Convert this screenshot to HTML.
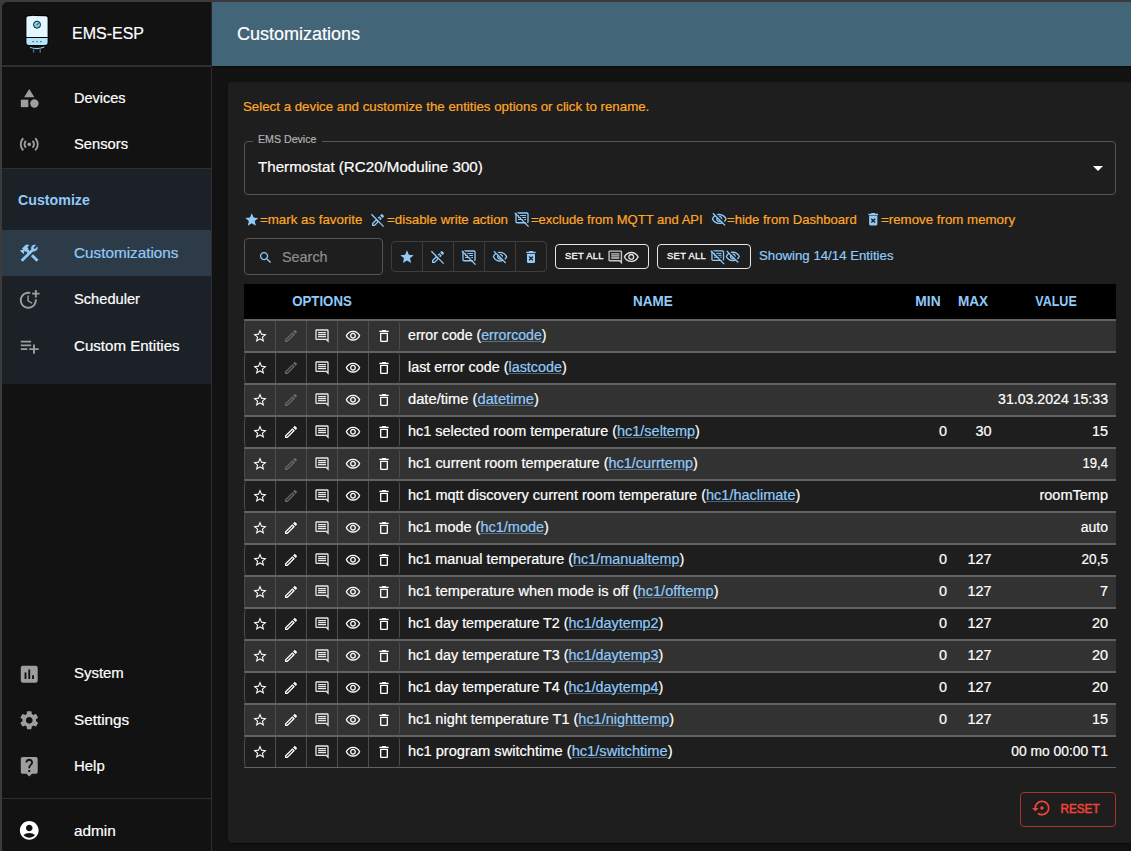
<!DOCTYPE html>
<html><head><meta charset="utf-8">
<style>
*{box-sizing:border-box;margin:0;padding:0}
html,body{width:1131px;height:851px;overflow:hidden;background:#3b3b3b;font-family:"Liberation Sans",sans-serif;color:#fff;position:relative}
.abs{position:absolute}
.ic{position:absolute;display:block}
.txt{position:absolute;white-space:nowrap;line-height:1;-webkit-text-stroke:0.2px currentColor}
.b{-webkit-text-stroke:0}
.lk{color:#90caf9;text-decoration:underline;text-decoration-color:rgba(144,202,249,.4);text-underline-offset:1px}
</style></head><body>
<div class="abs" style="left:2px;top:2px;width:1129px;height:849px;background:#121212;border-top-left-radius:6px"></div>
<div class="abs" style="left:2px;top:2px;width:210px;height:849px;background:#121212;border-right:1px solid #2e2e2e;border-top-left-radius:6px"></div>
<svg class="ic" style="left:22px;top:12px;width:30px;height:44px" viewBox="0 0 30 44">
<path d="M7.3 34.2 Q15 37.2 22.9 33.7 L22.7 35.8 Q15 39.6 7.5 36 Z" fill="#81d4fa" stroke="#000" stroke-width="0.8"/>
<rect x="10.3" y="36.8" width="2.6" height="4.4" rx="0.6" fill="#000"/>
<rect x="10.8" y="37.3" width="1.6" height="3.4" fill="#6a6a6a"/>
<rect x="16.9" y="36.8" width="2.6" height="4.4" rx="0.6" fill="#000"/>
<rect x="17.4" y="37.3" width="1.6" height="3.4" fill="#6a6a6a"/>
<rect x="3.5" y="3" width="23" height="31" rx="3" fill="#000"/>
<path d="M4.4 6 Q4.4 4.4 6.4 4.3 L10 3.9 Q11 3.5 12 3.9 L23.6 4.3 Q25.6 4.4 25.6 6 L25.6 25 L4.4 25 Z" fill="#e3f7fe"/>
<path d="M4.4 25.9 L25.6 25.9 L25.6 30.5 Q25.6 33 23 33 L7 33 Q4.4 33 4.4 30.5 Z" fill="#b3e5fc"/>
<rect x="10.4" y="29.1" width="1.5" height="1.1" fill="#555"/>
<rect x="14.3" y="29.1" width="1.5" height="1.1" fill="#555"/>
<rect x="18.1" y="29.1" width="1.5" height="1.1" fill="#555"/>
<circle cx="15" cy="12.7" r="3.5" fill="#7fcff5" stroke="#000" stroke-width="0.9"/>
<path d="M14.6 13.2 L16.6 11.1" stroke="#000" stroke-width="0.8"/>
</svg>
<div class="txt" style="left:72.3px;top:26.38px;font-size:16.8px;color:#fff;font-weight:normal;transform:scaleX(0.9526);transform-origin:0 50%;">EMS-ESP</div>
<div class="abs" style="left:2px;top:65px;width:209px;height:2px;background:#2f2f2f"></div>
<svg class="ic" style="left:18.05px;top:86.75px;width:22.5px;height:22.5px;fill:#9e9e9e;" viewBox="0 0 24 24"><path d="m12 2-5.5 9h11z"/><circle cx="17.5" cy="17.5" r="4.5"/><path d="M3 13.5h8v8H3z"/></svg>
<div class="txt" style="left:74.2px;top:90.20px;font-size:15px;color:#fff;font-weight:normal;transform:scaleX(0.9672);transform-origin:0 50%;">Devices</div>
<svg class="ic" style="left:18.05px;top:132.75px;width:22.5px;height:22.5px;fill:#9e9e9e;" viewBox="0 0 24 24"><path d="M7.76 16.24C6.67 15.16 6 13.66 6 12s.67-3.16 1.76-4.24l1.42 1.42C8.45 9.9 8 10.9 8 12c0 1.1.45 2.1 1.17 2.83l-1.41 1.41zm8.48 0C17.33 15.16 18 13.66 18 12s-.67-3.16-1.76-4.24l-1.42 1.42C15.55 9.9 16 10.9 16 12c0 1.1-.45 2.1-1.17 2.83l1.41 1.41zM12 10c-1.1 0-2 .9-2 2s.9 2 2 2 2-.9 2-2-.9-2-2-2zm8 2c0 2.21-.9 4.21-2.35 5.65l1.42 1.42C20.88 17.26 22 14.76 22 12s-1.12-5.26-2.93-7.07l-1.42 1.42C19.1 7.79 20 9.79 20 12zM6.35 6.35 4.93 4.93C3.12 6.74 2 9.24 2 12s1.12 5.26 2.93 7.07l1.42-1.42C4.9 16.21 4 14.21 4 12s.9-4.21 2.35-5.65z"/></svg>
<div class="txt" style="left:74.2px;top:136.20px;font-size:15px;color:#fff;font-weight:normal;transform:scaleX(0.9817);transform-origin:0 50%;">Sensors</div>
<div class="abs" style="left:2px;top:168px;width:209px;height:216px;background:#1c2128;border-top:1px solid #2c2e31"></div>
<div class="txt b" style="left:17.8px;top:192.10px;font-size:15px;color:#90caf9;font-weight:bold;transform:scaleX(0.9478);transform-origin:0 50%;">Customize</div>
<div class="abs" style="left:2px;top:230px;width:209px;height:46px;background:#2d3b48"></div>
<svg class="ic" style="left:18.05px;top:241.75px;width:22.5px;height:22.5px;fill:#90caf9;" viewBox="0 0 24 24"><path d="m13.7826 15.1719 2.1213-2.1213 5.9963 5.9962-2.1213 2.1213zM17.5 10c1.93 0 3.5-1.57 3.5-3.5 0-.58-.16-1.12-.41-1.6l-2.7 2.7-1.49-1.49 2.7-2.7c-.48-.25-1.02-.41-1.6-.41C15.57 3 14 4.57 14 6.5c0 .41.08.8.21 1.16l-1.85 1.85-1.78-1.78.71-.71-1.41-1.41L12 3.49c-1.17-1.17-3.07-1.17-4.24 0L4.22 7.03l1.41 1.41H2.81l-.71.71 3.54 3.54.71-.71V9.15l1.41 1.41.71-.71 1.78 1.78-7.41 7.41 2.12 2.12L16.34 9.79c.36.13.75.21 1.16.21z"/></svg>
<div class="txt" style="left:74.2px;top:245.20px;font-size:15px;color:#90caf9;font-weight:normal;transform:scaleX(1.0187);transform-origin:0 50%;">Customizations</div>
<svg class="ic" style="left:18.05px;top:287.75px;width:22.5px;height:22.5px;fill:#9e9e9e;" viewBox="0 0 24 24"><path d="M10 8v6l4.7 2.9.8-1.2-4-2.4V8z"/><path d="M17.92 12c.05.33.08.66.08 1 0 3.9-3.1 7-7 7s-7-3.1-7-7 3.1-7 7-7c.7 0 1.37.1 2 .29V4.23c-.64-.15-1.31-.23-2-.23-5 0-9 4-9 9s4 9 9 9 9-4 9-9c0-.34-.02-.67-.06-1h-2.02z"/><path d="M20 5V2h-2v3h-3v2h3v3h2V7h3V5z"/></svg>
<div class="txt" style="left:74.2px;top:291.20px;font-size:15px;color:#fff;font-weight:normal;transform:scaleX(0.9766);transform-origin:0 50%;">Scheduler</div>
<svg class="ic" style="left:18.05px;top:334.75px;width:22.5px;height:22.5px;fill:#9e9e9e;" viewBox="0 0 24 24"><path d="M14 10H3v2h11v-2zm0-4H3v2h11V6zm4 8v-4h-2v4h-4v2h4v4h2v-4h4v-2h-4zM3 16h7v-2H3v2z"/></svg>
<div class="txt" style="left:74.2px;top:338.20px;font-size:15px;color:#fff;font-weight:normal;transform:scaleX(1.0053);transform-origin:0 50%;">Custom Entities</div>
<svg class="ic" style="left:18.05px;top:662.75px;width:22.5px;height:22.5px;fill:#9e9e9e;" viewBox="0 0 24 24"><path d="M19 3H5c-1.1 0-2 .9-2 2v14c0 1.1.9 2 2 2h14c1.1 0 2-.9 2-2V5c0-1.1-.9-2-2-2zM9 17H7v-7h2v7zm4 0h-2V7h2v10zm4 0h-2v-4h2v4z"/></svg>
<div class="txt" style="left:74.2px;top:665.20px;font-size:15px;color:#fff;font-weight:normal;transform:scaleX(0.9955);transform-origin:0 50%;">System</div>
<svg class="ic" style="left:18.05px;top:709.05px;width:22.5px;height:22.5px;fill:#9e9e9e;" viewBox="0 0 24 24"><path d="M19.14 12.94c.04-.3.06-.61.06-.94 0-.32-.02-.64-.07-.94l2.03-1.58c.18-.14.23-.41.12-.61l-1.92-3.32c-.12-.22-.37-.29-.59-.22l-2.39.96c-.5-.38-1.03-.7-1.62-.94l-.36-2.54c-.04-.24-.24-.41-.48-.41h-3.84c-.24 0-.43.17-.47.41l-.36 2.54c-.59.24-1.13.57-1.62.94l-2.39-.96c-.22-.08-.47 0-.59.22L2.74 8.87c-.12.21-.08.47.12.61l2.03 1.58c-.05.3-.09.63-.09.94s.02.64.07.94l-2.03 1.58c-.18.14-.23.41-.12.61l1.92 3.32c.12.22.37.29.59.22l2.39-.96c.5.38 1.03.7 1.62.94l.36 2.54c.05.24.24.41.48.41h3.84c.24 0 .44-.17.47-.41l.36-2.54c.59-.24 1.13-.56 1.62-.94l2.39.96c.22.08.47 0 .59-.22l1.92-3.32c.12-.22.07-.47-.12-.61l-2.01-1.58zM12 15.6c-1.98 0-3.6-1.62-3.6-3.6s1.62-3.6 3.6-3.6 3.6 1.62 3.6 3.6-1.62 3.6-3.6 3.6z"/></svg>
<div class="txt" style="left:74.2px;top:711.70px;font-size:15px;color:#fff;font-weight:normal;transform:scaleX(1.0186);transform-origin:0 50%;">Settings</div>
<svg class="ic" style="left:18.05px;top:755.05px;width:22.5px;height:22.5px;fill:#9e9e9e;" viewBox="0 0 24 24"><path d="M19 2H5c-1.11 0-2 .9-2 2v14c0 1.1.89 2 2 2h4l3 3 3-3h4c1.1 0 2-.9 2-2V4c0-1.1-.9-2-2-2zm-6 16h-2v-2h2v2zm2.07-7.75-.9.92C13.45 11.9 13 12.5 13 14h-2v-.5c0-1.1.45-2.1 1.17-2.83l1.24-1.26c.37-.36.59-.86.59-1.41 0-1.1-.9-2-2-2s-2 .9-2 2H8c0-2.21 1.79-4 4-4s4 1.79 4 4c0 .88-.36 1.68-.93 2.25z"/></svg>
<div class="txt" style="left:74.2px;top:757.70px;font-size:15px;color:#fff;font-weight:normal;transform:scaleX(0.9948);transform-origin:0 50%;">Help</div>
<div class="abs" style="left:2px;top:798px;width:209px;height:1px;background:#2e2e2e"></div>
<svg class="ic" style="left:18.05px;top:818.75px;width:22.5px;height:22.5px;fill:#fff;" viewBox="0 0 24 24"><path d="M12 2C6.48 2 2 6.48 2 12s4.48 10 10 10 10-4.48 10-10S17.52 2 12 2zm0 4c1.93 0 3.5 1.57 3.5 3.5S13.93 13 12 13s-3.5-1.57-3.5-3.5S10.07 6 12 6zm0 14c-2.03 0-4.43-.82-6.14-2.88C7.55 15.8 9.68 15 12 15s4.45.8 6.14 2.12C16.43 19.18 14.03 20 12 20z"/></svg>
<div class="txt" style="left:74.2px;top:823.00px;font-size:15px;color:#fff;font-weight:normal;transform:scaleX(1.0234);transform-origin:0 50%;">admin</div>
<div class="abs" style="left:212px;top:2px;width:919px;height:64px;background:#426577;box-shadow:0 1px 2px rgba(0,0,0,.45)"></div>
<div class="txt" style="left:236.7px;top:24.66px;font-size:18px;color:#fff;font-weight:normal;transform:scaleX(0.9998);transform-origin:0 50%;">Customizations</div>
<div class="abs" style="left:228px;top:82px;width:904px;height:761px;background:#1e1e1e;border-radius:4px;box-shadow:0 2px 1px -1px rgba(0,0,0,.2),0 1px 1px 0 rgba(0,0,0,.14),0 1px 3px 0 rgba(0,0,0,.12)"></div>
<div class="txt" style="left:243.4px;top:99.84px;font-size:13.3px;color:#ffa726;font-weight:normal;transform:scaleX(0.9995);transform-origin:0 50%;">Select a device and customize the entities options or click to rename.</div>
<div class="abs" style="left:244px;top:141px;width:872px;height:54px;border:1px solid #555;border-radius:4px"></div>
<div class="abs" style="left:253px;top:138px;width:69px;height:6px;background:#1e1e1e"></div>
<div class="txt" style="left:258.2px;top:133.77px;font-size:10.9px;color:#b3b3b3;font-weight:normal;transform:scaleX(0.9755);transform-origin:0 50%;">EMS Device</div>
<div class="txt" style="left:258.2px;top:158.83px;font-size:15.2px;color:#fff;font-weight:normal;transform:scaleX(0.9975);transform-origin:0 50%;">Thermostat (RC20/Moduline 300)</div>
<svg class="ic" style="left:1086px;top:156px;width:24px;height:24px;fill:#fff;" viewBox="0 0 24 24"><path d="m7 10 5 5 5-5z"/></svg>
<svg class="ic" style="left:244.1px;top:211.9px;width:15.6px;height:15.6px;fill:#90caf9;" viewBox="0 0 24 24"><path d="M12 17.27 18.18 21l-1.64-7.03L22 9.24l-7.19-.61L12 2 9.19 8.63 2 9.24l5.46 4.73L5.82 21z"/></svg>
<div class="txt" style="left:260.4px;top:212.54px;font-size:13.3px;color:#ffa726;font-weight:normal;transform:scaleX(1.0002);transform-origin:0 50%;">=mark as favorite</div>
<svg class="ic" style="left:369.8px;top:212px;width:16px;height:16px;fill:#90caf9;" viewBox="0 0 24 24"><path d="m14.06 9.02.92.92-1.11 1.11 1.41 1.41 2.52-2.52-3.75-3.75-2.52 2.52 1.41 1.41 1.12-1.1zm6.65-1.98c.39-.39.39-1.02 0-1.41l-2.34-2.34c-.2-.2-.45-.29-.71-.29s-.51.1-.7.29l-1.83 1.83 3.75 3.75 1.83-1.83zM2.81 2.81 1.39 4.22l7.07 7.07L3 16.75V21h4.25l5.46-5.46 7.07 7.07 1.41-1.41L2.81 2.81zM6.42 19H5v-1.42l4.46-4.46 1.42 1.42L6.42 19z"/></svg>
<div class="txt" style="left:386.6px;top:212.54px;font-size:13.3px;color:#ffa726;font-weight:normal;transform:scaleX(1.0011);transform-origin:0 50%;">=disable write action</div>
<svg class="ic" style="left:514px;top:211px;width:16px;height:16px" viewBox="0 0 24 24"><rect x="3" y="3" width="18" height="14.6" rx="1.6" fill="none" stroke="#90caf9" stroke-width="2"/><rect x="6" y="6" width="12" height="1.5" fill="#90caf9"/><rect x="6" y="9" width="12" height="1.5" fill="#90caf9"/><rect x="6" y="12" width="12" height="1.5" fill="#90caf9"/><path d="M2.7 1.3 L23.3 21.9" stroke="#1e1e1e" stroke-width="1.7"/><path d="M1.3 2.8 L21.9 23.4" stroke="#90caf9" stroke-width="2"/></svg>
<div class="txt" style="left:531.4px;top:212.54px;font-size:13.3px;color:#ffa726;font-weight:normal;transform:scaleX(0.9793);transform-origin:0 50%;">=exclude from MQTT and API</div>
<svg class="ic" style="left:710.5px;top:211px;width:16.5px;height:16.5px;fill:#90caf9;" viewBox="0 0 24 24"><path d="M12 6c3.79 0 7.17 2.13 8.82 5.5-.59 1.22-1.42 2.27-2.41 3.12l1.41 1.41c1.39-1.23 2.49-2.77 3.18-4.53C21.27 7.11 17 4 12 4c-1.27 0-2.49.2-3.64.57l1.65 1.65C10.66 6.09 11.32 6 12 6zm-1.07 1.14L13 9.21c.57.25 1.03.71 1.28 1.28l2.07 2.07c.08-.34.14-.7.14-1.07C16.5 9.01 14.48 7 12 7c-.37 0-.72.05-1.07.14zM2.01 3.87l2.68 2.68C3.06 7.83 1.77 9.53 1 11.5 2.73 15.89 7 19 12 19c1.52 0 2.98-.29 4.32-.82l3.42 3.42 1.41-1.41L3.42 2.45 2.01 3.87zm7.5 7.5 2.61 2.61c-.04.01-.08.02-.12.02-1.38 0-2.5-1.12-2.5-2.5 0-.05.01-.08.01-.13zm-3.4-3.4 1.75 1.75c-.23.55-.36 1.15-.36 1.78 0 2.48 2.02 4.5 4.5 4.5.63 0 1.23-.13 1.77-.36l.98.98c-.88.24-1.8.38-2.75.38-3.79 0-7.17-2.13-8.82-5.5.7-1.43 1.72-2.61 2.93-3.53z"/></svg>
<div class="txt" style="left:727.1px;top:212.54px;font-size:13.3px;color:#ffa726;font-weight:normal;transform:scaleX(0.9828);transform-origin:0 50%;">=hide from Dashboard</div>
<svg class="ic" style="left:864.5px;top:211px;width:16.5px;height:16.5px;fill:#90caf9;" viewBox="0 0 24 24"><path d="M6 19c0 1.1.9 2 2 2h8c1.1 0 2-.9 2-2V7H6v12zm2.46-7.12 1.41-1.41L12 12.59l2.12-2.12 1.41 1.41L13.41 14l2.12 2.12-1.41 1.41L12 15.41l-2.12 2.12-1.41-1.41L10.59 14l-2.13-2.12zM15.5 4l-1-1h-5l-1 1H5v2h14V4z"/></svg>
<div class="txt" style="left:881px;top:212.54px;font-size:13.3px;color:#ffa726;font-weight:normal;transform:scaleX(0.9998);transform-origin:0 50%;">=remove from memory</div>
<div class="abs" style="left:244px;top:238px;width:139px;height:37px;border:1px solid #555;border-radius:4px"></div>
<svg class="ic" style="left:257.9px;top:249.5px;width:15.3px;height:15.3px;fill:#90caf9;" viewBox="0 0 24 24"><path d="M15.5 14h-.79l-.28-.27C15.41 12.59 16 11.11 16 9.5 16 5.91 13.09 3 9.5 3S3 5.91 3 9.5 5.91 16 9.5 16c1.61 0 3.09-.59 4.23-1.57l.27.28v.79l5 4.99L20.49 19l-4.99-5zm-6 0C7.01 14 5 11.99 5 9.5S7.01 5 9.5 5 14 7.01 14 9.5 11.99 14 9.5 14z"/></svg>
<div class="txt" style="left:282.1px;top:250.23px;font-size:14.5px;color:#8e8e8e;font-weight:normal;transform:scaleX(0.9929);transform-origin:0 50%;">Search</div>
<div class="abs" style="left:391px;top:241px;width:156px;height:31px;border:1px solid #3d3d3d;border-radius:4px"></div>
<div class="abs" style="left:422px;top:241px;width:1px;height:31px;background:#3d3d3d"></div>
<div class="abs" style="left:453px;top:241px;width:1px;height:31px;background:#3d3d3d"></div>
<div class="abs" style="left:484px;top:241px;width:1px;height:31px;background:#3d3d3d"></div>
<div class="abs" style="left:515px;top:241px;width:1px;height:31px;background:#3d3d3d"></div>
<svg class="ic" style="left:398.9px;top:248.5px;width:16px;height:16px;fill:#90caf9;" viewBox="0 0 24 24"><path d="M12 17.27 18.18 21l-1.64-7.03L22 9.24l-7.19-.61L12 2 9.19 8.63 2 9.24l5.46 4.73L5.82 21z"/></svg>
<svg class="ic" style="left:429.9px;top:248.5px;width:16px;height:16px;fill:#90caf9;" viewBox="0 0 24 24"><path d="m14.06 9.02.92.92-1.11 1.11 1.41 1.41 2.52-2.52-3.75-3.75-2.52 2.52 1.41 1.41 1.12-1.1zm6.65-1.98c.39-.39.39-1.02 0-1.41l-2.34-2.34c-.2-.2-.45-.29-.71-.29s-.51.1-.7.29l-1.83 1.83 3.75 3.75 1.83-1.83zM2.81 2.81 1.39 4.22l7.07 7.07L3 16.75V21h4.25l5.46-5.46 7.07 7.07 1.41-1.41L2.81 2.81zM6.42 19H5v-1.42l4.46-4.46 1.42 1.42L6.42 19z"/></svg>
<svg class="ic" style="left:461px;top:249px;width:16px;height:16px" viewBox="0 0 24 24"><rect x="3" y="3" width="18" height="14.6" rx="1.6" fill="none" stroke="#90caf9" stroke-width="2"/><rect x="6" y="6" width="12" height="1.5" fill="#90caf9"/><rect x="6" y="9" width="12" height="1.5" fill="#90caf9"/><rect x="6" y="12" width="12" height="1.5" fill="#90caf9"/><path d="M2.7 1.3 L23.3 21.9" stroke="#1e1e1e" stroke-width="1.7"/><path d="M1.3 2.8 L21.9 23.4" stroke="#90caf9" stroke-width="2"/></svg>
<svg class="ic" style="left:491.9px;top:248.5px;width:16px;height:16px;fill:#90caf9;" viewBox="0 0 24 24"><path d="M12 6c3.79 0 7.17 2.13 8.82 5.5-.59 1.22-1.42 2.27-2.41 3.12l1.41 1.41c1.39-1.23 2.49-2.77 3.18-4.53C21.27 7.11 17 4 12 4c-1.27 0-2.49.2-3.64.57l1.65 1.65C10.66 6.09 11.32 6 12 6zm-1.07 1.14L13 9.21c.57.25 1.03.71 1.28 1.28l2.07 2.07c.08-.34.14-.7.14-1.07C16.5 9.01 14.48 7 12 7c-.37 0-.72.05-1.07.14zM2.01 3.87l2.68 2.68C3.06 7.83 1.77 9.53 1 11.5 2.73 15.89 7 19 12 19c1.52 0 2.98-.29 4.32-.82l3.42 3.42 1.41-1.41L3.42 2.45 2.01 3.87zm7.5 7.5 2.61 2.61c-.04.01-.08.02-.12.02-1.38 0-2.5-1.12-2.5-2.5 0-.05.01-.08.01-.13zm-3.4-3.4 1.75 1.75c-.23.55-.36 1.15-.36 1.78 0 2.48 2.02 4.5 4.5 4.5.63 0 1.23-.13 1.77-.36l.98.98c-.88.24-1.8.38-2.75.38-3.79 0-7.17-2.13-8.82-5.5.7-1.43 1.72-2.61 2.93-3.53z"/></svg>
<svg class="ic" style="left:522.9px;top:248.5px;width:16px;height:16px;fill:#90caf9;" viewBox="0 0 24 24"><path d="M6 19c0 1.1.9 2 2 2h8c1.1 0 2-.9 2-2V7H6v12zm2.46-7.12 1.41-1.41L12 12.59l2.12-2.12 1.41 1.41L13.41 14l2.12 2.12-1.41 1.41L12 15.41l-2.12 2.12-1.41-1.41L10.59 14l-2.13-2.12zM15.5 4l-1-1h-5l-1 1H5v2h14V4z"/></svg>
<div class="abs" style="left:555px;top:244px;width:94px;height:25px;border:1px solid #e6e6e6;border-radius:4px"></div>
<div class="txt" style="left:284.4px;width:600px;text-align:center;top:251.14px;font-size:9.4px;color:#fff;font-weight:normal;letter-spacing:0.3px;-webkit-text-stroke:0.3px #fff;">SET ALL</div>
<svg class="ic" style="left:606.5px;top:248.5px;width:16.5px;height:16.5px;fill:#c8c8c8;" viewBox="0 0 24 24"><path d="M21.99 4c0-1.1-.89-2-1.99-2H4c-1.1 0-2 .9-2 2v12c0 1.1.9 2 2 2h14l4 4-.01-18zM20 4v13.17L18.83 16H4V4h16zM6 12h12v2H6zm0-3h12v2H6zm0-3h12v2H6z"/></svg>
<svg class="ic" style="left:622.5px;top:248.5px;width:16.5px;height:16.5px;fill:#e0e0e0;" viewBox="0 0 24 24"><path d="M12 6c3.79 0 7.17 2.13 8.82 5.5C19.17 14.87 15.79 17 12 17s-7.17-2.13-8.82-5.5C4.83 8.13 8.21 6 12 6m0-2C7 4 2.73 7.11 1 11.5 2.73 15.89 7 19 12 19s9.27-3.11 11-7.5C21.27 7.11 17 4 12 4zm0 5c1.38 0 2.5 1.12 2.5 2.5S13.38 14 12 14s-2.5-1.12-2.5-2.5S10.62 9 12 9m0-2c-2.48 0-4.5 2.02-4.5 4.5S9.52 16 12 16s4.5-2.02 4.5-4.5S14.48 7 12 7z"/></svg>
<div class="abs" style="left:657px;top:244px;width:94px;height:25px;border:1px solid #e6e6e6;border-radius:4px"></div>
<div class="txt" style="left:386.5px;width:600px;text-align:center;top:251.14px;font-size:9.4px;color:#fff;font-weight:normal;letter-spacing:0.3px;-webkit-text-stroke:0.3px #fff;">SET ALL</div>
<svg class="ic" style="left:710px;top:249px;width:15.5px;height:15.5px" viewBox="0 0 24 24"><rect x="3" y="3" width="18" height="14.6" rx="1.6" fill="none" stroke="#90caf9" stroke-width="2"/><rect x="6" y="6" width="12" height="1.5" fill="#90caf9"/><rect x="6" y="9" width="12" height="1.5" fill="#90caf9"/><rect x="6" y="12" width="12" height="1.5" fill="#90caf9"/><path d="M2.7 1.3 L23.3 21.9" stroke="#1e1e1e" stroke-width="1.7"/><path d="M1.3 2.8 L21.9 23.4" stroke="#90caf9" stroke-width="2"/></svg>
<svg class="ic" style="left:724.8px;top:249.2px;width:15.6px;height:15.6px;fill:#90caf9;" viewBox="0 0 24 24"><path d="M12 6c3.79 0 7.17 2.13 8.82 5.5-.59 1.22-1.42 2.27-2.41 3.12l1.41 1.41c1.39-1.23 2.49-2.77 3.18-4.53C21.27 7.11 17 4 12 4c-1.27 0-2.49.2-3.64.57l1.65 1.65C10.66 6.09 11.32 6 12 6zm-1.07 1.14L13 9.21c.57.25 1.03.71 1.28 1.28l2.07 2.07c.08-.34.14-.7.14-1.07C16.5 9.01 14.48 7 12 7c-.37 0-.72.05-1.07.14zM2.01 3.87l2.68 2.68C3.06 7.83 1.77 9.53 1 11.5 2.73 15.89 7 19 12 19c1.52 0 2.98-.29 4.32-.82l3.42 3.42 1.41-1.41L3.42 2.45 2.01 3.87zm7.5 7.5 2.61 2.61c-.04.01-.08.02-.12.02-1.38 0-2.5-1.12-2.5-2.5 0-.05.01-.08.01-.13zm-3.4-3.4 1.75 1.75c-.23.55-.36 1.15-.36 1.78 0 2.48 2.02 4.5 4.5 4.5.63 0 1.23-.13 1.77-.36l.98.98c-.88.24-1.8.38-2.75.38-3.79 0-7.17-2.13-8.82-5.5.7-1.43 1.72-2.61 2.93-3.53z"/></svg>
<div class="txt" style="left:758.8px;top:248.58px;font-size:13.25px;color:#90caf9;font-weight:normal;transform:scaleX(0.9979);transform-origin:0 50%;">Showing 14/14 Entities</div>
<div class="abs" style="left:244px;top:284px;width:872px;height:35px;background:#000"></div>
<div class="txt b" style="left:21.69999999999999px;width:600px;text-align:center;top:292.93px;font-size:15.2px;color:#90caf9;font-weight:bold;transform:scaleX(0.8713);transform-origin:50% 50%;">OPTIONS</div>
<div class="txt b" style="left:353px;width:600px;text-align:center;top:292.93px;font-size:15.2px;color:#90caf9;font-weight:bold;transform:scaleX(0.8891);transform-origin:50% 50%;">NAME</div>
<div class="txt b" style="left:628px;width:600px;text-align:center;top:292.93px;font-size:15.2px;color:#90caf9;font-weight:bold;transform:scaleX(0.9083);transform-origin:50% 50%;">MIN</div>
<div class="txt b" style="left:673.4px;width:600px;text-align:center;top:292.93px;font-size:15.2px;color:#90caf9;font-weight:bold;transform:scaleX(0.8940);transform-origin:50% 50%;">MAX</div>
<div class="txt b" style="left:756px;width:600px;text-align:center;top:292.93px;font-size:15.2px;color:#90caf9;font-weight:bold;transform:scaleX(0.8236);transform-origin:50% 50%;">VALUE</div>
<div class="abs" style="left:244px;top:319px;width:872px;height:2px;background:#616161"></div>
<div class="abs" style="left:244px;top:321px;width:872px;height:30px;background:#323232"></div>
<div class="abs" style="left:244px;top:351px;width:872px;height:2px;background:#616161"></div>
<div class="abs" style="left:244px;top:321px;width:156px;height:30px;border:1px solid #4c4c4c;border-top:none;border-bottom:none;border-radius:4px"></div>
<div class="abs" style="left:275px;top:321px;width:1px;height:30px;background:#4c4c4c"></div>
<div class="abs" style="left:306px;top:321px;width:1px;height:30px;background:#4c4c4c"></div>
<div class="abs" style="left:337px;top:321px;width:1px;height:30px;background:#4c4c4c"></div>
<div class="abs" style="left:368px;top:321px;width:1px;height:30px;background:#4c4c4c"></div>
<svg class="ic" style="left:251.8px;top:328px;width:16px;height:16px;fill:#fff;" viewBox="0 0 24 24"><path d="m22 9.24-7.19-.62L12 2 9.19 8.63 2 9.24l5.46 4.73L5.82 21 12 17.27 18.18 21l-1.63-7.03L22 9.24zM12 15.4l-3.76 2.27 1-4.28-3.32-2.88 4.38-.38L12 6.1l1.71 4.04 4.38.38-3.32 2.88 1 4.28L12 15.4z"/></svg>
<svg class="ic" style="left:282.85px;top:328px;width:16px;height:16px;fill:#686868;" viewBox="0 0 24 24"><path d="M3 17.25V21h3.75L17.81 9.94l-3.75-3.75L3 17.25zM5.92 19H5v-.92l9.06-9.06.92.92L5.92 19zM20.71 5.63l-2.34-2.34c-.39-.39-1.02-.39-1.41 0l-1.83 1.83 3.75 3.75 1.83-1.83c.39-.39.39-1.02 0-1.41z"/></svg>
<svg class="ic" style="left:313.90000000000003px;top:328px;width:16px;height:16px;fill:#e6e6e6;" viewBox="0 0 24 24"><path d="M21.99 4c0-1.1-.89-2-1.99-2H4c-1.1 0-2 .9-2 2v12c0 1.1.9 2 2 2h14l4 4-.01-18zM20 4v13.17L18.83 16H4V4h16zM6 12h12v2H6zm0-3h12v2H6zm0-3h12v2H6z"/></svg>
<svg class="ic" style="left:344.95000000000005px;top:328px;width:16px;height:16px;fill:#fff;" viewBox="0 0 24 24"><path d="M12 6c3.79 0 7.17 2.13 8.82 5.5C19.17 14.87 15.79 17 12 17s-7.17-2.13-8.82-5.5C4.83 8.13 8.21 6 12 6m0-2C7 4 2.73 7.11 1 11.5 2.73 15.89 7 19 12 19s9.27-3.11 11-7.5C21.27 7.11 17 4 12 4zm0 5c1.38 0 2.5 1.12 2.5 2.5S13.38 14 12 14s-2.5-1.12-2.5-2.5S10.62 9 12 9m0-2c-2.48 0-4.5 2.02-4.5 4.5S9.52 16 12 16s4.5-2.02 4.5-4.5S14.48 7 12 7z"/></svg>
<svg class="ic" style="left:376.0px;top:328px;width:16px;height:16px;fill:#fff;" viewBox="0 0 24 24"><path d="M6 19c0 1.1.9 2 2 2h8c1.1 0 2-.9 2-2V7H6v12zM8 9h8v10H8V9zm7.5-5-1-1h-5l-1 1H5v2h14V4z"/></svg>
<div class="txt" style="left:408.1px;top:327.97px;font-size:14.45px;color:#fff;font-weight:normal;transform:scaleX(0.9812);transform-origin:0 50%;">error code (<span class="lk">errorcode</span>)</div>
<div class="abs" style="left:244px;top:353px;width:872px;height:30px;background:#1e1e1e"></div>
<div class="abs" style="left:244px;top:383px;width:872px;height:2px;background:#616161"></div>
<div class="abs" style="left:244px;top:353px;width:156px;height:30px;border:1px solid #4c4c4c;border-top:none;border-bottom:none;border-radius:4px"></div>
<div class="abs" style="left:275px;top:353px;width:1px;height:30px;background:#4c4c4c"></div>
<div class="abs" style="left:306px;top:353px;width:1px;height:30px;background:#4c4c4c"></div>
<div class="abs" style="left:337px;top:353px;width:1px;height:30px;background:#4c4c4c"></div>
<div class="abs" style="left:368px;top:353px;width:1px;height:30px;background:#4c4c4c"></div>
<svg class="ic" style="left:251.8px;top:360px;width:16px;height:16px;fill:#fff;" viewBox="0 0 24 24"><path d="m22 9.24-7.19-.62L12 2 9.19 8.63 2 9.24l5.46 4.73L5.82 21 12 17.27 18.18 21l-1.63-7.03L22 9.24zM12 15.4l-3.76 2.27 1-4.28-3.32-2.88 4.38-.38L12 6.1l1.71 4.04 4.38.38-3.32 2.88 1 4.28L12 15.4z"/></svg>
<svg class="ic" style="left:282.85px;top:360px;width:16px;height:16px;fill:#686868;" viewBox="0 0 24 24"><path d="M3 17.25V21h3.75L17.81 9.94l-3.75-3.75L3 17.25zM5.92 19H5v-.92l9.06-9.06.92.92L5.92 19zM20.71 5.63l-2.34-2.34c-.39-.39-1.02-.39-1.41 0l-1.83 1.83 3.75 3.75 1.83-1.83c.39-.39.39-1.02 0-1.41z"/></svg>
<svg class="ic" style="left:313.90000000000003px;top:360px;width:16px;height:16px;fill:#e6e6e6;" viewBox="0 0 24 24"><path d="M21.99 4c0-1.1-.89-2-1.99-2H4c-1.1 0-2 .9-2 2v12c0 1.1.9 2 2 2h14l4 4-.01-18zM20 4v13.17L18.83 16H4V4h16zM6 12h12v2H6zm0-3h12v2H6zm0-3h12v2H6z"/></svg>
<svg class="ic" style="left:344.95000000000005px;top:360px;width:16px;height:16px;fill:#fff;" viewBox="0 0 24 24"><path d="M12 6c3.79 0 7.17 2.13 8.82 5.5C19.17 14.87 15.79 17 12 17s-7.17-2.13-8.82-5.5C4.83 8.13 8.21 6 12 6m0-2C7 4 2.73 7.11 1 11.5 2.73 15.89 7 19 12 19s9.27-3.11 11-7.5C21.27 7.11 17 4 12 4zm0 5c1.38 0 2.5 1.12 2.5 2.5S13.38 14 12 14s-2.5-1.12-2.5-2.5S10.62 9 12 9m0-2c-2.48 0-4.5 2.02-4.5 4.5S9.52 16 12 16s4.5-2.02 4.5-4.5S14.48 7 12 7z"/></svg>
<svg class="ic" style="left:376.0px;top:360px;width:16px;height:16px;fill:#fff;" viewBox="0 0 24 24"><path d="M6 19c0 1.1.9 2 2 2h8c1.1 0 2-.9 2-2V7H6v12zM8 9h8v10H8V9zm7.5-5-1-1h-5l-1 1H5v2h14V4z"/></svg>
<div class="txt" style="left:408.1px;top:359.97px;font-size:14.45px;color:#fff;font-weight:normal;transform:scaleX(0.9936);transform-origin:0 50%;">last error code (<span class="lk">lastcode</span>)</div>
<div class="abs" style="left:244px;top:385px;width:872px;height:30px;background:#323232"></div>
<div class="abs" style="left:244px;top:415px;width:872px;height:2px;background:#616161"></div>
<div class="abs" style="left:244px;top:385px;width:156px;height:30px;border:1px solid #4c4c4c;border-top:none;border-bottom:none;border-radius:4px"></div>
<div class="abs" style="left:275px;top:385px;width:1px;height:30px;background:#4c4c4c"></div>
<div class="abs" style="left:306px;top:385px;width:1px;height:30px;background:#4c4c4c"></div>
<div class="abs" style="left:337px;top:385px;width:1px;height:30px;background:#4c4c4c"></div>
<div class="abs" style="left:368px;top:385px;width:1px;height:30px;background:#4c4c4c"></div>
<svg class="ic" style="left:251.8px;top:392px;width:16px;height:16px;fill:#fff;" viewBox="0 0 24 24"><path d="m22 9.24-7.19-.62L12 2 9.19 8.63 2 9.24l5.46 4.73L5.82 21 12 17.27 18.18 21l-1.63-7.03L22 9.24zM12 15.4l-3.76 2.27 1-4.28-3.32-2.88 4.38-.38L12 6.1l1.71 4.04 4.38.38-3.32 2.88 1 4.28L12 15.4z"/></svg>
<svg class="ic" style="left:282.85px;top:392px;width:16px;height:16px;fill:#686868;" viewBox="0 0 24 24"><path d="M3 17.25V21h3.75L17.81 9.94l-3.75-3.75L3 17.25zM5.92 19H5v-.92l9.06-9.06.92.92L5.92 19zM20.71 5.63l-2.34-2.34c-.39-.39-1.02-.39-1.41 0l-1.83 1.83 3.75 3.75 1.83-1.83c.39-.39.39-1.02 0-1.41z"/></svg>
<svg class="ic" style="left:313.90000000000003px;top:392px;width:16px;height:16px;fill:#e6e6e6;" viewBox="0 0 24 24"><path d="M21.99 4c0-1.1-.89-2-1.99-2H4c-1.1 0-2 .9-2 2v12c0 1.1.9 2 2 2h14l4 4-.01-18zM20 4v13.17L18.83 16H4V4h16zM6 12h12v2H6zm0-3h12v2H6zm0-3h12v2H6z"/></svg>
<svg class="ic" style="left:344.95000000000005px;top:392px;width:16px;height:16px;fill:#fff;" viewBox="0 0 24 24"><path d="M12 6c3.79 0 7.17 2.13 8.82 5.5C19.17 14.87 15.79 17 12 17s-7.17-2.13-8.82-5.5C4.83 8.13 8.21 6 12 6m0-2C7 4 2.73 7.11 1 11.5 2.73 15.89 7 19 12 19s9.27-3.11 11-7.5C21.27 7.11 17 4 12 4zm0 5c1.38 0 2.5 1.12 2.5 2.5S13.38 14 12 14s-2.5-1.12-2.5-2.5S10.62 9 12 9m0-2c-2.48 0-4.5 2.02-4.5 4.5S9.52 16 12 16s4.5-2.02 4.5-4.5S14.48 7 12 7z"/></svg>
<svg class="ic" style="left:376.0px;top:392px;width:16px;height:16px;fill:#fff;" viewBox="0 0 24 24"><path d="M6 19c0 1.1.9 2 2 2h8c1.1 0 2-.9 2-2V7H6v12zM8 9h8v10H8V9zm7.5-5-1-1h-5l-1 1H5v2h14V4z"/></svg>
<div class="txt" style="left:408.1px;top:391.97px;font-size:14.45px;color:#fff;font-weight:normal;transform:scaleX(1.0187);transform-origin:0 50%;">date/time (<span class="lk">datetime</span>)</div>
<div class="txt" style="left:508px;width:600px;text-align:right;top:391.67px;font-size:14.45px;color:#fff;font-weight:normal;transform:scaleX(0.9779);transform-origin:100% 50%;">31.03.2024 15:33</div>
<div class="abs" style="left:244px;top:417px;width:872px;height:30px;background:#1e1e1e"></div>
<div class="abs" style="left:244px;top:447px;width:872px;height:2px;background:#616161"></div>
<div class="abs" style="left:244px;top:417px;width:156px;height:30px;border:1px solid #4c4c4c;border-top:none;border-bottom:none;border-radius:4px"></div>
<div class="abs" style="left:275px;top:417px;width:1px;height:30px;background:#4c4c4c"></div>
<div class="abs" style="left:306px;top:417px;width:1px;height:30px;background:#4c4c4c"></div>
<div class="abs" style="left:337px;top:417px;width:1px;height:30px;background:#4c4c4c"></div>
<div class="abs" style="left:368px;top:417px;width:1px;height:30px;background:#4c4c4c"></div>
<svg class="ic" style="left:251.8px;top:424px;width:16px;height:16px;fill:#fff;" viewBox="0 0 24 24"><path d="m22 9.24-7.19-.62L12 2 9.19 8.63 2 9.24l5.46 4.73L5.82 21 12 17.27 18.18 21l-1.63-7.03L22 9.24zM12 15.4l-3.76 2.27 1-4.28-3.32-2.88 4.38-.38L12 6.1l1.71 4.04 4.38.38-3.32 2.88 1 4.28L12 15.4z"/></svg>
<svg class="ic" style="left:282.85px;top:424px;width:16px;height:16px;fill:#fff;" viewBox="0 0 24 24"><path d="M3 17.25V21h3.75L17.81 9.94l-3.75-3.75L3 17.25zM5.92 19H5v-.92l9.06-9.06.92.92L5.92 19zM20.71 5.63l-2.34-2.34c-.39-.39-1.02-.39-1.41 0l-1.83 1.83 3.75 3.75 1.83-1.83c.39-.39.39-1.02 0-1.41z"/></svg>
<svg class="ic" style="left:313.90000000000003px;top:424px;width:16px;height:16px;fill:#e6e6e6;" viewBox="0 0 24 24"><path d="M21.99 4c0-1.1-.89-2-1.99-2H4c-1.1 0-2 .9-2 2v12c0 1.1.9 2 2 2h14l4 4-.01-18zM20 4v13.17L18.83 16H4V4h16zM6 12h12v2H6zm0-3h12v2H6zm0-3h12v2H6z"/></svg>
<svg class="ic" style="left:344.95000000000005px;top:424px;width:16px;height:16px;fill:#fff;" viewBox="0 0 24 24"><path d="M12 6c3.79 0 7.17 2.13 8.82 5.5C19.17 14.87 15.79 17 12 17s-7.17-2.13-8.82-5.5C4.83 8.13 8.21 6 12 6m0-2C7 4 2.73 7.11 1 11.5 2.73 15.89 7 19 12 19s9.27-3.11 11-7.5C21.27 7.11 17 4 12 4zm0 5c1.38 0 2.5 1.12 2.5 2.5S13.38 14 12 14s-2.5-1.12-2.5-2.5S10.62 9 12 9m0-2c-2.48 0-4.5 2.02-4.5 4.5S9.52 16 12 16s4.5-2.02 4.5-4.5S14.48 7 12 7z"/></svg>
<svg class="ic" style="left:376.0px;top:424px;width:16px;height:16px;fill:#fff;" viewBox="0 0 24 24"><path d="M6 19c0 1.1.9 2 2 2h8c1.1 0 2-.9 2-2V7H6v12zM8 9h8v10H8V9zm7.5-5-1-1h-5l-1 1H5v2h14V4z"/></svg>
<div class="txt" style="left:408.1px;top:423.97px;font-size:14.45px;color:#fff;font-weight:normal;transform:scaleX(1.0018);transform-origin:0 50%;">hc1 selected room temperature (<span class="lk">hc1/seltemp</span>)</div>
<div class="txt" style="left:347px;width:600px;text-align:right;top:423.67px;font-size:14.45px;color:#fff;font-weight:normal;">0</div>
<div class="txt" style="left:391.5px;width:600px;text-align:right;top:423.67px;font-size:14.45px;color:#fff;font-weight:normal;">30</div>
<div class="txt" style="left:508px;width:600px;text-align:right;top:423.67px;font-size:14.45px;color:#fff;font-weight:normal;">15</div>
<div class="abs" style="left:244px;top:449px;width:872px;height:30px;background:#323232"></div>
<div class="abs" style="left:244px;top:479px;width:872px;height:2px;background:#616161"></div>
<div class="abs" style="left:244px;top:449px;width:156px;height:30px;border:1px solid #4c4c4c;border-top:none;border-bottom:none;border-radius:4px"></div>
<div class="abs" style="left:275px;top:449px;width:1px;height:30px;background:#4c4c4c"></div>
<div class="abs" style="left:306px;top:449px;width:1px;height:30px;background:#4c4c4c"></div>
<div class="abs" style="left:337px;top:449px;width:1px;height:30px;background:#4c4c4c"></div>
<div class="abs" style="left:368px;top:449px;width:1px;height:30px;background:#4c4c4c"></div>
<svg class="ic" style="left:251.8px;top:456px;width:16px;height:16px;fill:#fff;" viewBox="0 0 24 24"><path d="m22 9.24-7.19-.62L12 2 9.19 8.63 2 9.24l5.46 4.73L5.82 21 12 17.27 18.18 21l-1.63-7.03L22 9.24zM12 15.4l-3.76 2.27 1-4.28-3.32-2.88 4.38-.38L12 6.1l1.71 4.04 4.38.38-3.32 2.88 1 4.28L12 15.4z"/></svg>
<svg class="ic" style="left:282.85px;top:456px;width:16px;height:16px;fill:#686868;" viewBox="0 0 24 24"><path d="M3 17.25V21h3.75L17.81 9.94l-3.75-3.75L3 17.25zM5.92 19H5v-.92l9.06-9.06.92.92L5.92 19zM20.71 5.63l-2.34-2.34c-.39-.39-1.02-.39-1.41 0l-1.83 1.83 3.75 3.75 1.83-1.83c.39-.39.39-1.02 0-1.41z"/></svg>
<svg class="ic" style="left:313.90000000000003px;top:456px;width:16px;height:16px;fill:#e6e6e6;" viewBox="0 0 24 24"><path d="M21.99 4c0-1.1-.89-2-1.99-2H4c-1.1 0-2 .9-2 2v12c0 1.1.9 2 2 2h14l4 4-.01-18zM20 4v13.17L18.83 16H4V4h16zM6 12h12v2H6zm0-3h12v2H6zm0-3h12v2H6z"/></svg>
<svg class="ic" style="left:344.95000000000005px;top:456px;width:16px;height:16px;fill:#fff;" viewBox="0 0 24 24"><path d="M12 6c3.79 0 7.17 2.13 8.82 5.5C19.17 14.87 15.79 17 12 17s-7.17-2.13-8.82-5.5C4.83 8.13 8.21 6 12 6m0-2C7 4 2.73 7.11 1 11.5 2.73 15.89 7 19 12 19s9.27-3.11 11-7.5C21.27 7.11 17 4 12 4zm0 5c1.38 0 2.5 1.12 2.5 2.5S13.38 14 12 14s-2.5-1.12-2.5-2.5S10.62 9 12 9m0-2c-2.48 0-4.5 2.02-4.5 4.5S9.52 16 12 16s4.5-2.02 4.5-4.5S14.48 7 12 7z"/></svg>
<svg class="ic" style="left:376.0px;top:456px;width:16px;height:16px;fill:#fff;" viewBox="0 0 24 24"><path d="M6 19c0 1.1.9 2 2 2h8c1.1 0 2-.9 2-2V7H6v12zM8 9h8v10H8V9zm7.5-5-1-1h-5l-1 1H5v2h14V4z"/></svg>
<div class="txt" style="left:408.1px;top:455.97px;font-size:14.45px;color:#fff;font-weight:normal;transform:scaleX(1.0034);transform-origin:0 50%;">hc1 current room temperature (<span class="lk">hc1/currtemp</span>)</div>
<div class="txt" style="left:508px;width:600px;text-align:right;top:455.67px;font-size:14.45px;color:#fff;font-weight:normal;transform:scaleX(0.9106);transform-origin:100% 50%;">19,4</div>
<div class="abs" style="left:244px;top:481px;width:872px;height:30px;background:#1e1e1e"></div>
<div class="abs" style="left:244px;top:511px;width:872px;height:2px;background:#616161"></div>
<div class="abs" style="left:244px;top:481px;width:156px;height:30px;border:1px solid #4c4c4c;border-top:none;border-bottom:none;border-radius:4px"></div>
<div class="abs" style="left:275px;top:481px;width:1px;height:30px;background:#4c4c4c"></div>
<div class="abs" style="left:306px;top:481px;width:1px;height:30px;background:#4c4c4c"></div>
<div class="abs" style="left:337px;top:481px;width:1px;height:30px;background:#4c4c4c"></div>
<div class="abs" style="left:368px;top:481px;width:1px;height:30px;background:#4c4c4c"></div>
<svg class="ic" style="left:251.8px;top:488px;width:16px;height:16px;fill:#fff;" viewBox="0 0 24 24"><path d="m22 9.24-7.19-.62L12 2 9.19 8.63 2 9.24l5.46 4.73L5.82 21 12 17.27 18.18 21l-1.63-7.03L22 9.24zM12 15.4l-3.76 2.27 1-4.28-3.32-2.88 4.38-.38L12 6.1l1.71 4.04 4.38.38-3.32 2.88 1 4.28L12 15.4z"/></svg>
<svg class="ic" style="left:282.85px;top:488px;width:16px;height:16px;fill:#686868;" viewBox="0 0 24 24"><path d="M3 17.25V21h3.75L17.81 9.94l-3.75-3.75L3 17.25zM5.92 19H5v-.92l9.06-9.06.92.92L5.92 19zM20.71 5.63l-2.34-2.34c-.39-.39-1.02-.39-1.41 0l-1.83 1.83 3.75 3.75 1.83-1.83c.39-.39.39-1.02 0-1.41z"/></svg>
<svg class="ic" style="left:313.90000000000003px;top:488px;width:16px;height:16px;fill:#e6e6e6;" viewBox="0 0 24 24"><path d="M21.99 4c0-1.1-.89-2-1.99-2H4c-1.1 0-2 .9-2 2v12c0 1.1.9 2 2 2h14l4 4-.01-18zM20 4v13.17L18.83 16H4V4h16zM6 12h12v2H6zm0-3h12v2H6zm0-3h12v2H6z"/></svg>
<svg class="ic" style="left:344.95000000000005px;top:488px;width:16px;height:16px;fill:#fff;" viewBox="0 0 24 24"><path d="M12 6c3.79 0 7.17 2.13 8.82 5.5C19.17 14.87 15.79 17 12 17s-7.17-2.13-8.82-5.5C4.83 8.13 8.21 6 12 6m0-2C7 4 2.73 7.11 1 11.5 2.73 15.89 7 19 12 19s9.27-3.11 11-7.5C21.27 7.11 17 4 12 4zm0 5c1.38 0 2.5 1.12 2.5 2.5S13.38 14 12 14s-2.5-1.12-2.5-2.5S10.62 9 12 9m0-2c-2.48 0-4.5 2.02-4.5 4.5S9.52 16 12 16s4.5-2.02 4.5-4.5S14.48 7 12 7z"/></svg>
<svg class="ic" style="left:376.0px;top:488px;width:16px;height:16px;fill:#fff;" viewBox="0 0 24 24"><path d="M6 19c0 1.1.9 2 2 2h8c1.1 0 2-.9 2-2V7H6v12zM8 9h8v10H8V9zm7.5-5-1-1h-5l-1 1H5v2h14V4z"/></svg>
<div class="txt" style="left:408.1px;top:487.97px;font-size:14.45px;color:#fff;font-weight:normal;transform:scaleX(1.0038);transform-origin:0 50%;">hc1 mqtt discovery current room temperature (<span class="lk">hc1/haclimate</span>)</div>
<div class="txt" style="left:508px;width:600px;text-align:right;top:487.67px;font-size:14.45px;color:#fff;font-weight:normal;transform:scaleX(1.0047);transform-origin:100% 50%;">roomTemp</div>
<div class="abs" style="left:244px;top:513px;width:872px;height:30px;background:#323232"></div>
<div class="abs" style="left:244px;top:543px;width:872px;height:2px;background:#616161"></div>
<div class="abs" style="left:244px;top:513px;width:156px;height:30px;border:1px solid #4c4c4c;border-top:none;border-bottom:none;border-radius:4px"></div>
<div class="abs" style="left:275px;top:513px;width:1px;height:30px;background:#4c4c4c"></div>
<div class="abs" style="left:306px;top:513px;width:1px;height:30px;background:#4c4c4c"></div>
<div class="abs" style="left:337px;top:513px;width:1px;height:30px;background:#4c4c4c"></div>
<div class="abs" style="left:368px;top:513px;width:1px;height:30px;background:#4c4c4c"></div>
<svg class="ic" style="left:251.8px;top:520px;width:16px;height:16px;fill:#fff;" viewBox="0 0 24 24"><path d="m22 9.24-7.19-.62L12 2 9.19 8.63 2 9.24l5.46 4.73L5.82 21 12 17.27 18.18 21l-1.63-7.03L22 9.24zM12 15.4l-3.76 2.27 1-4.28-3.32-2.88 4.38-.38L12 6.1l1.71 4.04 4.38.38-3.32 2.88 1 4.28L12 15.4z"/></svg>
<svg class="ic" style="left:282.85px;top:520px;width:16px;height:16px;fill:#fff;" viewBox="0 0 24 24"><path d="M3 17.25V21h3.75L17.81 9.94l-3.75-3.75L3 17.25zM5.92 19H5v-.92l9.06-9.06.92.92L5.92 19zM20.71 5.63l-2.34-2.34c-.39-.39-1.02-.39-1.41 0l-1.83 1.83 3.75 3.75 1.83-1.83c.39-.39.39-1.02 0-1.41z"/></svg>
<svg class="ic" style="left:313.90000000000003px;top:520px;width:16px;height:16px;fill:#e6e6e6;" viewBox="0 0 24 24"><path d="M21.99 4c0-1.1-.89-2-1.99-2H4c-1.1 0-2 .9-2 2v12c0 1.1.9 2 2 2h14l4 4-.01-18zM20 4v13.17L18.83 16H4V4h16zM6 12h12v2H6zm0-3h12v2H6zm0-3h12v2H6z"/></svg>
<svg class="ic" style="left:344.95000000000005px;top:520px;width:16px;height:16px;fill:#fff;" viewBox="0 0 24 24"><path d="M12 6c3.79 0 7.17 2.13 8.82 5.5C19.17 14.87 15.79 17 12 17s-7.17-2.13-8.82-5.5C4.83 8.13 8.21 6 12 6m0-2C7 4 2.73 7.11 1 11.5 2.73 15.89 7 19 12 19s9.27-3.11 11-7.5C21.27 7.11 17 4 12 4zm0 5c1.38 0 2.5 1.12 2.5 2.5S13.38 14 12 14s-2.5-1.12-2.5-2.5S10.62 9 12 9m0-2c-2.48 0-4.5 2.02-4.5 4.5S9.52 16 12 16s4.5-2.02 4.5-4.5S14.48 7 12 7z"/></svg>
<svg class="ic" style="left:376.0px;top:520px;width:16px;height:16px;fill:#fff;" viewBox="0 0 24 24"><path d="M6 19c0 1.1.9 2 2 2h8c1.1 0 2-.9 2-2V7H6v12zM8 9h8v10H8V9zm7.5-5-1-1h-5l-1 1H5v2h14V4z"/></svg>
<div class="txt" style="left:408.1px;top:519.97px;font-size:14.45px;color:#fff;font-weight:normal;transform:scaleX(1.0031);transform-origin:0 50%;">hc1 mode (<span class="lk">hc1/mode</span>)</div>
<div class="txt" style="left:508px;width:600px;text-align:right;top:519.67px;font-size:14.45px;color:#fff;font-weight:normal;transform:scaleX(0.9704);transform-origin:100% 50%;">auto</div>
<div class="abs" style="left:244px;top:545px;width:872px;height:30px;background:#1e1e1e"></div>
<div class="abs" style="left:244px;top:575px;width:872px;height:2px;background:#616161"></div>
<div class="abs" style="left:244px;top:545px;width:156px;height:30px;border:1px solid #4c4c4c;border-top:none;border-bottom:none;border-radius:4px"></div>
<div class="abs" style="left:275px;top:545px;width:1px;height:30px;background:#4c4c4c"></div>
<div class="abs" style="left:306px;top:545px;width:1px;height:30px;background:#4c4c4c"></div>
<div class="abs" style="left:337px;top:545px;width:1px;height:30px;background:#4c4c4c"></div>
<div class="abs" style="left:368px;top:545px;width:1px;height:30px;background:#4c4c4c"></div>
<svg class="ic" style="left:251.8px;top:552px;width:16px;height:16px;fill:#fff;" viewBox="0 0 24 24"><path d="m22 9.24-7.19-.62L12 2 9.19 8.63 2 9.24l5.46 4.73L5.82 21 12 17.27 18.18 21l-1.63-7.03L22 9.24zM12 15.4l-3.76 2.27 1-4.28-3.32-2.88 4.38-.38L12 6.1l1.71 4.04 4.38.38-3.32 2.88 1 4.28L12 15.4z"/></svg>
<svg class="ic" style="left:282.85px;top:552px;width:16px;height:16px;fill:#fff;" viewBox="0 0 24 24"><path d="M3 17.25V21h3.75L17.81 9.94l-3.75-3.75L3 17.25zM5.92 19H5v-.92l9.06-9.06.92.92L5.92 19zM20.71 5.63l-2.34-2.34c-.39-.39-1.02-.39-1.41 0l-1.83 1.83 3.75 3.75 1.83-1.83c.39-.39.39-1.02 0-1.41z"/></svg>
<svg class="ic" style="left:313.90000000000003px;top:552px;width:16px;height:16px;fill:#e6e6e6;" viewBox="0 0 24 24"><path d="M21.99 4c0-1.1-.89-2-1.99-2H4c-1.1 0-2 .9-2 2v12c0 1.1.9 2 2 2h14l4 4-.01-18zM20 4v13.17L18.83 16H4V4h16zM6 12h12v2H6zm0-3h12v2H6zm0-3h12v2H6z"/></svg>
<svg class="ic" style="left:344.95000000000005px;top:552px;width:16px;height:16px;fill:#fff;" viewBox="0 0 24 24"><path d="M12 6c3.79 0 7.17 2.13 8.82 5.5C19.17 14.87 15.79 17 12 17s-7.17-2.13-8.82-5.5C4.83 8.13 8.21 6 12 6m0-2C7 4 2.73 7.11 1 11.5 2.73 15.89 7 19 12 19s9.27-3.11 11-7.5C21.27 7.11 17 4 12 4zm0 5c1.38 0 2.5 1.12 2.5 2.5S13.38 14 12 14s-2.5-1.12-2.5-2.5S10.62 9 12 9m0-2c-2.48 0-4.5 2.02-4.5 4.5S9.52 16 12 16s4.5-2.02 4.5-4.5S14.48 7 12 7z"/></svg>
<svg class="ic" style="left:376.0px;top:552px;width:16px;height:16px;fill:#fff;" viewBox="0 0 24 24"><path d="M6 19c0 1.1.9 2 2 2h8c1.1 0 2-.9 2-2V7H6v12zM8 9h8v10H8V9zm7.5-5-1-1h-5l-1 1H5v2h14V4z"/></svg>
<div class="txt" style="left:408.1px;top:551.97px;font-size:14.45px;color:#fff;font-weight:normal;transform:scaleX(0.9981);transform-origin:0 50%;">hc1 manual temperature (<span class="lk">hc1/manualtemp</span>)</div>
<div class="txt" style="left:347px;width:600px;text-align:right;top:551.67px;font-size:14.45px;color:#fff;font-weight:normal;">0</div>
<div class="txt" style="left:391.5px;width:600px;text-align:right;top:551.67px;font-size:14.45px;color:#fff;font-weight:normal;">127</div>
<div class="txt" style="left:508px;width:600px;text-align:right;top:551.67px;font-size:14.45px;color:#fff;font-weight:normal;transform:scaleX(0.9423);transform-origin:100% 50%;">20,5</div>
<div class="abs" style="left:244px;top:577px;width:872px;height:30px;background:#323232"></div>
<div class="abs" style="left:244px;top:607px;width:872px;height:2px;background:#616161"></div>
<div class="abs" style="left:244px;top:577px;width:156px;height:30px;border:1px solid #4c4c4c;border-top:none;border-bottom:none;border-radius:4px"></div>
<div class="abs" style="left:275px;top:577px;width:1px;height:30px;background:#4c4c4c"></div>
<div class="abs" style="left:306px;top:577px;width:1px;height:30px;background:#4c4c4c"></div>
<div class="abs" style="left:337px;top:577px;width:1px;height:30px;background:#4c4c4c"></div>
<div class="abs" style="left:368px;top:577px;width:1px;height:30px;background:#4c4c4c"></div>
<svg class="ic" style="left:251.8px;top:584px;width:16px;height:16px;fill:#fff;" viewBox="0 0 24 24"><path d="m22 9.24-7.19-.62L12 2 9.19 8.63 2 9.24l5.46 4.73L5.82 21 12 17.27 18.18 21l-1.63-7.03L22 9.24zM12 15.4l-3.76 2.27 1-4.28-3.32-2.88 4.38-.38L12 6.1l1.71 4.04 4.38.38-3.32 2.88 1 4.28L12 15.4z"/></svg>
<svg class="ic" style="left:282.85px;top:584px;width:16px;height:16px;fill:#fff;" viewBox="0 0 24 24"><path d="M3 17.25V21h3.75L17.81 9.94l-3.75-3.75L3 17.25zM5.92 19H5v-.92l9.06-9.06.92.92L5.92 19zM20.71 5.63l-2.34-2.34c-.39-.39-1.02-.39-1.41 0l-1.83 1.83 3.75 3.75 1.83-1.83c.39-.39.39-1.02 0-1.41z"/></svg>
<svg class="ic" style="left:313.90000000000003px;top:584px;width:16px;height:16px;fill:#e6e6e6;" viewBox="0 0 24 24"><path d="M21.99 4c0-1.1-.89-2-1.99-2H4c-1.1 0-2 .9-2 2v12c0 1.1.9 2 2 2h14l4 4-.01-18zM20 4v13.17L18.83 16H4V4h16zM6 12h12v2H6zm0-3h12v2H6zm0-3h12v2H6z"/></svg>
<svg class="ic" style="left:344.95000000000005px;top:584px;width:16px;height:16px;fill:#fff;" viewBox="0 0 24 24"><path d="M12 6c3.79 0 7.17 2.13 8.82 5.5C19.17 14.87 15.79 17 12 17s-7.17-2.13-8.82-5.5C4.83 8.13 8.21 6 12 6m0-2C7 4 2.73 7.11 1 11.5 2.73 15.89 7 19 12 19s9.27-3.11 11-7.5C21.27 7.11 17 4 12 4zm0 5c1.38 0 2.5 1.12 2.5 2.5S13.38 14 12 14s-2.5-1.12-2.5-2.5S10.62 9 12 9m0-2c-2.48 0-4.5 2.02-4.5 4.5S9.52 16 12 16s4.5-2.02 4.5-4.5S14.48 7 12 7z"/></svg>
<svg class="ic" style="left:376.0px;top:584px;width:16px;height:16px;fill:#fff;" viewBox="0 0 24 24"><path d="M6 19c0 1.1.9 2 2 2h8c1.1 0 2-.9 2-2V7H6v12zM8 9h8v10H8V9zm7.5-5-1-1h-5l-1 1H5v2h14V4z"/></svg>
<div class="txt" style="left:408.1px;top:583.97px;font-size:14.45px;color:#fff;font-weight:normal;transform:scaleX(1.0120);transform-origin:0 50%;">hc1 temperature when mode is off (<span class="lk">hc1/offtemp</span>)</div>
<div class="txt" style="left:347px;width:600px;text-align:right;top:583.67px;font-size:14.45px;color:#fff;font-weight:normal;">0</div>
<div class="txt" style="left:391.5px;width:600px;text-align:right;top:583.67px;font-size:14.45px;color:#fff;font-weight:normal;">127</div>
<div class="txt" style="left:508px;width:600px;text-align:right;top:583.67px;font-size:14.45px;color:#fff;font-weight:normal;">7</div>
<div class="abs" style="left:244px;top:609px;width:872px;height:30px;background:#1e1e1e"></div>
<div class="abs" style="left:244px;top:639px;width:872px;height:2px;background:#616161"></div>
<div class="abs" style="left:244px;top:609px;width:156px;height:30px;border:1px solid #4c4c4c;border-top:none;border-bottom:none;border-radius:4px"></div>
<div class="abs" style="left:275px;top:609px;width:1px;height:30px;background:#4c4c4c"></div>
<div class="abs" style="left:306px;top:609px;width:1px;height:30px;background:#4c4c4c"></div>
<div class="abs" style="left:337px;top:609px;width:1px;height:30px;background:#4c4c4c"></div>
<div class="abs" style="left:368px;top:609px;width:1px;height:30px;background:#4c4c4c"></div>
<svg class="ic" style="left:251.8px;top:616px;width:16px;height:16px;fill:#fff;" viewBox="0 0 24 24"><path d="m22 9.24-7.19-.62L12 2 9.19 8.63 2 9.24l5.46 4.73L5.82 21 12 17.27 18.18 21l-1.63-7.03L22 9.24zM12 15.4l-3.76 2.27 1-4.28-3.32-2.88 4.38-.38L12 6.1l1.71 4.04 4.38.38-3.32 2.88 1 4.28L12 15.4z"/></svg>
<svg class="ic" style="left:282.85px;top:616px;width:16px;height:16px;fill:#fff;" viewBox="0 0 24 24"><path d="M3 17.25V21h3.75L17.81 9.94l-3.75-3.75L3 17.25zM5.92 19H5v-.92l9.06-9.06.92.92L5.92 19zM20.71 5.63l-2.34-2.34c-.39-.39-1.02-.39-1.41 0l-1.83 1.83 3.75 3.75 1.83-1.83c.39-.39.39-1.02 0-1.41z"/></svg>
<svg class="ic" style="left:313.90000000000003px;top:616px;width:16px;height:16px;fill:#e6e6e6;" viewBox="0 0 24 24"><path d="M21.99 4c0-1.1-.89-2-1.99-2H4c-1.1 0-2 .9-2 2v12c0 1.1.9 2 2 2h14l4 4-.01-18zM20 4v13.17L18.83 16H4V4h16zM6 12h12v2H6zm0-3h12v2H6zm0-3h12v2H6z"/></svg>
<svg class="ic" style="left:344.95000000000005px;top:616px;width:16px;height:16px;fill:#fff;" viewBox="0 0 24 24"><path d="M12 6c3.79 0 7.17 2.13 8.82 5.5C19.17 14.87 15.79 17 12 17s-7.17-2.13-8.82-5.5C4.83 8.13 8.21 6 12 6m0-2C7 4 2.73 7.11 1 11.5 2.73 15.89 7 19 12 19s9.27-3.11 11-7.5C21.27 7.11 17 4 12 4zm0 5c1.38 0 2.5 1.12 2.5 2.5S13.38 14 12 14s-2.5-1.12-2.5-2.5S10.62 9 12 9m0-2c-2.48 0-4.5 2.02-4.5 4.5S9.52 16 12 16s4.5-2.02 4.5-4.5S14.48 7 12 7z"/></svg>
<svg class="ic" style="left:376.0px;top:616px;width:16px;height:16px;fill:#fff;" viewBox="0 0 24 24"><path d="M6 19c0 1.1.9 2 2 2h8c1.1 0 2-.9 2-2V7H6v12zM8 9h8v10H8V9zm7.5-5-1-1h-5l-1 1H5v2h14V4z"/></svg>
<div class="txt" style="left:408.1px;top:615.97px;font-size:14.45px;color:#fff;font-weight:normal;transform:scaleX(0.9920);transform-origin:0 50%;">hc1 day temperature T2 (<span class="lk">hc1/daytemp2</span>)</div>
<div class="txt" style="left:347px;width:600px;text-align:right;top:615.67px;font-size:14.45px;color:#fff;font-weight:normal;">0</div>
<div class="txt" style="left:391.5px;width:600px;text-align:right;top:615.67px;font-size:14.45px;color:#fff;font-weight:normal;">127</div>
<div class="txt" style="left:508px;width:600px;text-align:right;top:615.67px;font-size:14.45px;color:#fff;font-weight:normal;">20</div>
<div class="abs" style="left:244px;top:641px;width:872px;height:30px;background:#323232"></div>
<div class="abs" style="left:244px;top:671px;width:872px;height:2px;background:#616161"></div>
<div class="abs" style="left:244px;top:641px;width:156px;height:30px;border:1px solid #4c4c4c;border-top:none;border-bottom:none;border-radius:4px"></div>
<div class="abs" style="left:275px;top:641px;width:1px;height:30px;background:#4c4c4c"></div>
<div class="abs" style="left:306px;top:641px;width:1px;height:30px;background:#4c4c4c"></div>
<div class="abs" style="left:337px;top:641px;width:1px;height:30px;background:#4c4c4c"></div>
<div class="abs" style="left:368px;top:641px;width:1px;height:30px;background:#4c4c4c"></div>
<svg class="ic" style="left:251.8px;top:648px;width:16px;height:16px;fill:#fff;" viewBox="0 0 24 24"><path d="m22 9.24-7.19-.62L12 2 9.19 8.63 2 9.24l5.46 4.73L5.82 21 12 17.27 18.18 21l-1.63-7.03L22 9.24zM12 15.4l-3.76 2.27 1-4.28-3.32-2.88 4.38-.38L12 6.1l1.71 4.04 4.38.38-3.32 2.88 1 4.28L12 15.4z"/></svg>
<svg class="ic" style="left:282.85px;top:648px;width:16px;height:16px;fill:#fff;" viewBox="0 0 24 24"><path d="M3 17.25V21h3.75L17.81 9.94l-3.75-3.75L3 17.25zM5.92 19H5v-.92l9.06-9.06.92.92L5.92 19zM20.71 5.63l-2.34-2.34c-.39-.39-1.02-.39-1.41 0l-1.83 1.83 3.75 3.75 1.83-1.83c.39-.39.39-1.02 0-1.41z"/></svg>
<svg class="ic" style="left:313.90000000000003px;top:648px;width:16px;height:16px;fill:#e6e6e6;" viewBox="0 0 24 24"><path d="M21.99 4c0-1.1-.89-2-1.99-2H4c-1.1 0-2 .9-2 2v12c0 1.1.9 2 2 2h14l4 4-.01-18zM20 4v13.17L18.83 16H4V4h16zM6 12h12v2H6zm0-3h12v2H6zm0-3h12v2H6z"/></svg>
<svg class="ic" style="left:344.95000000000005px;top:648px;width:16px;height:16px;fill:#fff;" viewBox="0 0 24 24"><path d="M12 6c3.79 0 7.17 2.13 8.82 5.5C19.17 14.87 15.79 17 12 17s-7.17-2.13-8.82-5.5C4.83 8.13 8.21 6 12 6m0-2C7 4 2.73 7.11 1 11.5 2.73 15.89 7 19 12 19s9.27-3.11 11-7.5C21.27 7.11 17 4 12 4zm0 5c1.38 0 2.5 1.12 2.5 2.5S13.38 14 12 14s-2.5-1.12-2.5-2.5S10.62 9 12 9m0-2c-2.48 0-4.5 2.02-4.5 4.5S9.52 16 12 16s4.5-2.02 4.5-4.5S14.48 7 12 7z"/></svg>
<svg class="ic" style="left:376.0px;top:648px;width:16px;height:16px;fill:#fff;" viewBox="0 0 24 24"><path d="M6 19c0 1.1.9 2 2 2h8c1.1 0 2-.9 2-2V7H6v12zM8 9h8v10H8V9zm7.5-5-1-1h-5l-1 1H5v2h14V4z"/></svg>
<div class="txt" style="left:408.1px;top:647.97px;font-size:14.45px;color:#fff;font-weight:normal;transform:scaleX(0.9920);transform-origin:0 50%;">hc1 day temperature T3 (<span class="lk">hc1/daytemp3</span>)</div>
<div class="txt" style="left:347px;width:600px;text-align:right;top:647.67px;font-size:14.45px;color:#fff;font-weight:normal;">0</div>
<div class="txt" style="left:391.5px;width:600px;text-align:right;top:647.67px;font-size:14.45px;color:#fff;font-weight:normal;">127</div>
<div class="txt" style="left:508px;width:600px;text-align:right;top:647.67px;font-size:14.45px;color:#fff;font-weight:normal;">20</div>
<div class="abs" style="left:244px;top:673px;width:872px;height:30px;background:#1e1e1e"></div>
<div class="abs" style="left:244px;top:703px;width:872px;height:2px;background:#616161"></div>
<div class="abs" style="left:244px;top:673px;width:156px;height:30px;border:1px solid #4c4c4c;border-top:none;border-bottom:none;border-radius:4px"></div>
<div class="abs" style="left:275px;top:673px;width:1px;height:30px;background:#4c4c4c"></div>
<div class="abs" style="left:306px;top:673px;width:1px;height:30px;background:#4c4c4c"></div>
<div class="abs" style="left:337px;top:673px;width:1px;height:30px;background:#4c4c4c"></div>
<div class="abs" style="left:368px;top:673px;width:1px;height:30px;background:#4c4c4c"></div>
<svg class="ic" style="left:251.8px;top:680px;width:16px;height:16px;fill:#fff;" viewBox="0 0 24 24"><path d="m22 9.24-7.19-.62L12 2 9.19 8.63 2 9.24l5.46 4.73L5.82 21 12 17.27 18.18 21l-1.63-7.03L22 9.24zM12 15.4l-3.76 2.27 1-4.28-3.32-2.88 4.38-.38L12 6.1l1.71 4.04 4.38.38-3.32 2.88 1 4.28L12 15.4z"/></svg>
<svg class="ic" style="left:282.85px;top:680px;width:16px;height:16px;fill:#fff;" viewBox="0 0 24 24"><path d="M3 17.25V21h3.75L17.81 9.94l-3.75-3.75L3 17.25zM5.92 19H5v-.92l9.06-9.06.92.92L5.92 19zM20.71 5.63l-2.34-2.34c-.39-.39-1.02-.39-1.41 0l-1.83 1.83 3.75 3.75 1.83-1.83c.39-.39.39-1.02 0-1.41z"/></svg>
<svg class="ic" style="left:313.90000000000003px;top:680px;width:16px;height:16px;fill:#e6e6e6;" viewBox="0 0 24 24"><path d="M21.99 4c0-1.1-.89-2-1.99-2H4c-1.1 0-2 .9-2 2v12c0 1.1.9 2 2 2h14l4 4-.01-18zM20 4v13.17L18.83 16H4V4h16zM6 12h12v2H6zm0-3h12v2H6zm0-3h12v2H6z"/></svg>
<svg class="ic" style="left:344.95000000000005px;top:680px;width:16px;height:16px;fill:#fff;" viewBox="0 0 24 24"><path d="M12 6c3.79 0 7.17 2.13 8.82 5.5C19.17 14.87 15.79 17 12 17s-7.17-2.13-8.82-5.5C4.83 8.13 8.21 6 12 6m0-2C7 4 2.73 7.11 1 11.5 2.73 15.89 7 19 12 19s9.27-3.11 11-7.5C21.27 7.11 17 4 12 4zm0 5c1.38 0 2.5 1.12 2.5 2.5S13.38 14 12 14s-2.5-1.12-2.5-2.5S10.62 9 12 9m0-2c-2.48 0-4.5 2.02-4.5 4.5S9.52 16 12 16s4.5-2.02 4.5-4.5S14.48 7 12 7z"/></svg>
<svg class="ic" style="left:376.0px;top:680px;width:16px;height:16px;fill:#fff;" viewBox="0 0 24 24"><path d="M6 19c0 1.1.9 2 2 2h8c1.1 0 2-.9 2-2V7H6v12zM8 9h8v10H8V9zm7.5-5-1-1h-5l-1 1H5v2h14V4z"/></svg>
<div class="txt" style="left:408.1px;top:679.97px;font-size:14.45px;color:#fff;font-weight:normal;transform:scaleX(0.9920);transform-origin:0 50%;">hc1 day temperature T4 (<span class="lk">hc1/daytemp4</span>)</div>
<div class="txt" style="left:347px;width:600px;text-align:right;top:679.67px;font-size:14.45px;color:#fff;font-weight:normal;">0</div>
<div class="txt" style="left:391.5px;width:600px;text-align:right;top:679.67px;font-size:14.45px;color:#fff;font-weight:normal;">127</div>
<div class="txt" style="left:508px;width:600px;text-align:right;top:679.67px;font-size:14.45px;color:#fff;font-weight:normal;">20</div>
<div class="abs" style="left:244px;top:705px;width:872px;height:30px;background:#323232"></div>
<div class="abs" style="left:244px;top:735px;width:872px;height:2px;background:#616161"></div>
<div class="abs" style="left:244px;top:705px;width:156px;height:30px;border:1px solid #4c4c4c;border-top:none;border-bottom:none;border-radius:4px"></div>
<div class="abs" style="left:275px;top:705px;width:1px;height:30px;background:#4c4c4c"></div>
<div class="abs" style="left:306px;top:705px;width:1px;height:30px;background:#4c4c4c"></div>
<div class="abs" style="left:337px;top:705px;width:1px;height:30px;background:#4c4c4c"></div>
<div class="abs" style="left:368px;top:705px;width:1px;height:30px;background:#4c4c4c"></div>
<svg class="ic" style="left:251.8px;top:712px;width:16px;height:16px;fill:#fff;" viewBox="0 0 24 24"><path d="m22 9.24-7.19-.62L12 2 9.19 8.63 2 9.24l5.46 4.73L5.82 21 12 17.27 18.18 21l-1.63-7.03L22 9.24zM12 15.4l-3.76 2.27 1-4.28-3.32-2.88 4.38-.38L12 6.1l1.71 4.04 4.38.38-3.32 2.88 1 4.28L12 15.4z"/></svg>
<svg class="ic" style="left:282.85px;top:712px;width:16px;height:16px;fill:#fff;" viewBox="0 0 24 24"><path d="M3 17.25V21h3.75L17.81 9.94l-3.75-3.75L3 17.25zM5.92 19H5v-.92l9.06-9.06.92.92L5.92 19zM20.71 5.63l-2.34-2.34c-.39-.39-1.02-.39-1.41 0l-1.83 1.83 3.75 3.75 1.83-1.83c.39-.39.39-1.02 0-1.41z"/></svg>
<svg class="ic" style="left:313.90000000000003px;top:712px;width:16px;height:16px;fill:#e6e6e6;" viewBox="0 0 24 24"><path d="M21.99 4c0-1.1-.89-2-1.99-2H4c-1.1 0-2 .9-2 2v12c0 1.1.9 2 2 2h14l4 4-.01-18zM20 4v13.17L18.83 16H4V4h16zM6 12h12v2H6zm0-3h12v2H6zm0-3h12v2H6z"/></svg>
<svg class="ic" style="left:344.95000000000005px;top:712px;width:16px;height:16px;fill:#fff;" viewBox="0 0 24 24"><path d="M12 6c3.79 0 7.17 2.13 8.82 5.5C19.17 14.87 15.79 17 12 17s-7.17-2.13-8.82-5.5C4.83 8.13 8.21 6 12 6m0-2C7 4 2.73 7.11 1 11.5 2.73 15.89 7 19 12 19s9.27-3.11 11-7.5C21.27 7.11 17 4 12 4zm0 5c1.38 0 2.5 1.12 2.5 2.5S13.38 14 12 14s-2.5-1.12-2.5-2.5S10.62 9 12 9m0-2c-2.48 0-4.5 2.02-4.5 4.5S9.52 16 12 16s4.5-2.02 4.5-4.5S14.48 7 12 7z"/></svg>
<svg class="ic" style="left:376.0px;top:712px;width:16px;height:16px;fill:#fff;" viewBox="0 0 24 24"><path d="M6 19c0 1.1.9 2 2 2h8c1.1 0 2-.9 2-2V7H6v12zM8 9h8v10H8V9zm7.5-5-1-1h-5l-1 1H5v2h14V4z"/></svg>
<div class="txt" style="left:408.1px;top:711.97px;font-size:14.45px;color:#fff;font-weight:normal;transform:scaleX(1.0027);transform-origin:0 50%;">hc1 night temperature T1 (<span class="lk">hc1/nighttemp</span>)</div>
<div class="txt" style="left:347px;width:600px;text-align:right;top:711.67px;font-size:14.45px;color:#fff;font-weight:normal;">0</div>
<div class="txt" style="left:391.5px;width:600px;text-align:right;top:711.67px;font-size:14.45px;color:#fff;font-weight:normal;">127</div>
<div class="txt" style="left:508px;width:600px;text-align:right;top:711.67px;font-size:14.45px;color:#fff;font-weight:normal;">15</div>
<div class="abs" style="left:244px;top:737px;width:872px;height:30px;background:#1e1e1e"></div>
<div class="abs" style="left:244px;top:767px;width:872px;height:1px;background:#616161"></div>
<div class="abs" style="left:244px;top:737px;width:156px;height:30px;border:1px solid #4c4c4c;border-top:none;border-bottom:none;border-radius:4px"></div>
<div class="abs" style="left:275px;top:737px;width:1px;height:30px;background:#4c4c4c"></div>
<div class="abs" style="left:306px;top:737px;width:1px;height:30px;background:#4c4c4c"></div>
<div class="abs" style="left:337px;top:737px;width:1px;height:30px;background:#4c4c4c"></div>
<div class="abs" style="left:368px;top:737px;width:1px;height:30px;background:#4c4c4c"></div>
<svg class="ic" style="left:251.8px;top:744px;width:16px;height:16px;fill:#fff;" viewBox="0 0 24 24"><path d="m22 9.24-7.19-.62L12 2 9.19 8.63 2 9.24l5.46 4.73L5.82 21 12 17.27 18.18 21l-1.63-7.03L22 9.24zM12 15.4l-3.76 2.27 1-4.28-3.32-2.88 4.38-.38L12 6.1l1.71 4.04 4.38.38-3.32 2.88 1 4.28L12 15.4z"/></svg>
<svg class="ic" style="left:282.85px;top:744px;width:16px;height:16px;fill:#fff;" viewBox="0 0 24 24"><path d="M3 17.25V21h3.75L17.81 9.94l-3.75-3.75L3 17.25zM5.92 19H5v-.92l9.06-9.06.92.92L5.92 19zM20.71 5.63l-2.34-2.34c-.39-.39-1.02-.39-1.41 0l-1.83 1.83 3.75 3.75 1.83-1.83c.39-.39.39-1.02 0-1.41z"/></svg>
<svg class="ic" style="left:313.90000000000003px;top:744px;width:16px;height:16px;fill:#e6e6e6;" viewBox="0 0 24 24"><path d="M21.99 4c0-1.1-.89-2-1.99-2H4c-1.1 0-2 .9-2 2v12c0 1.1.9 2 2 2h14l4 4-.01-18zM20 4v13.17L18.83 16H4V4h16zM6 12h12v2H6zm0-3h12v2H6zm0-3h12v2H6z"/></svg>
<svg class="ic" style="left:344.95000000000005px;top:744px;width:16px;height:16px;fill:#fff;" viewBox="0 0 24 24"><path d="M12 6c3.79 0 7.17 2.13 8.82 5.5C19.17 14.87 15.79 17 12 17s-7.17-2.13-8.82-5.5C4.83 8.13 8.21 6 12 6m0-2C7 4 2.73 7.11 1 11.5 2.73 15.89 7 19 12 19s9.27-3.11 11-7.5C21.27 7.11 17 4 12 4zm0 5c1.38 0 2.5 1.12 2.5 2.5S13.38 14 12 14s-2.5-1.12-2.5-2.5S10.62 9 12 9m0-2c-2.48 0-4.5 2.02-4.5 4.5S9.52 16 12 16s4.5-2.02 4.5-4.5S14.48 7 12 7z"/></svg>
<svg class="ic" style="left:376.0px;top:744px;width:16px;height:16px;fill:#fff;" viewBox="0 0 24 24"><path d="M6 19c0 1.1.9 2 2 2h8c1.1 0 2-.9 2-2V7H6v12zM8 9h8v10H8V9zm7.5-5-1-1h-5l-1 1H5v2h14V4z"/></svg>
<div class="txt" style="left:408.1px;top:743.97px;font-size:14.45px;color:#fff;font-weight:normal;transform:scaleX(1.0147);transform-origin:0 50%;">hc1 program switchtime (<span class="lk">hc1/switchtime</span>)</div>
<div class="txt" style="left:508px;width:600px;text-align:right;top:743.67px;font-size:14.45px;color:#fff;font-weight:normal;transform:scaleX(0.9588);transform-origin:100% 50%;">00 mo 00:00 T1</div>
<div class="abs" style="left:1020px;top:792px;width:96px;height:35px;border:1px solid #a8342c;border-radius:4px"></div>
<svg class="ic" style="left:1032px;top:798.2px;width:20px;height:20px;fill:#f44336;" viewBox="0 0 24 24"><path d="M14 12c0-1.1-.9-2-2-2s-2 .9-2 2 .9 2 2 2 2-.9 2-2zm-2-9c-4.97 0-9 4.03-9 9H0l4 4 4-4H5c0-3.87 3.13-7 7-7s7 3.13 7 7-3.13 7-7 7c-1.51 0-2.91-.49-4.06-1.3l-1.42 1.44C8.04 20.3 9.94 21 12 21c4.97 0 9-4.03 9-9s-4.03-9-9-9z"/></svg>
<div class="txt" style="left:780.3px;width:600px;text-align:center;top:802.66px;font-size:12.8px;color:#f44336;font-weight:normal;-webkit-text-stroke:0.5px #f44336;transform:scaleX(0.9165);transform-origin:50% 50%;">RESET</div>
</body></html>
